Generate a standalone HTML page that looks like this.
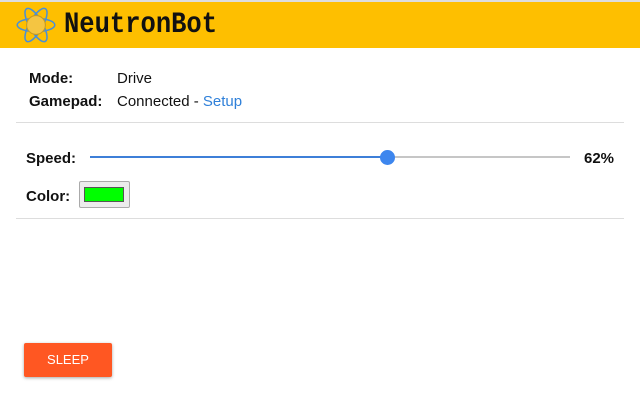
<!DOCTYPE html>
<html><head><style>
body{margin:0;width:640px;height:400px;background:#fff;font-family:"Liberation Sans",sans-serif;position:relative;overflow:hidden;font-size:15px;color:#111}
.hdr{position:absolute;top:2px;left:0;width:640px;height:46px;background:#FEBF00}
.top{position:absolute;top:0;left:0;width:640px;height:2px;background:#ddd}
.title{position:absolute;left:64px;top:8px;font-family:"Liberation Mono",monospace;font-weight:bold;font-size:25.5px;color:#111;transform:scaleY(1.15);transform-origin:left top}
.a{position:absolute}
.b{font-weight:bold}
.hr{position:absolute;left:16px;width:608px;height:1px;background:#ddd}
</style></head><body>
<div class="top"></div>
<div class="hdr"></div>
<svg class="a" style="left:15px;top:4px" width="42" height="42" viewBox="0 0 38 38">
<g fill="none" stroke="#4a8fd6" stroke-width="1.4">
<ellipse cx="19" cy="19" rx="17" ry="6"/>
<ellipse cx="19" cy="19" rx="17" ry="6" transform="rotate(60 19 19)"/>
<ellipse cx="19" cy="19" rx="17" ry="6" transform="rotate(120 19 19)"/>
</g>
<circle cx="19" cy="19" r="8.5" fill="#f4c542" stroke="#c79a20"/>
</svg>
<div class="title">NeutronBot</div>
<div class="a b" style="left:29px;top:70px">Mode:</div>
<div class="a" style="left:117px;top:70px">Drive</div>
<div class="a b" style="left:29px;top:93px">Gamepad:</div>
<div class="a" style="left:117px;top:93px">Connected - <span style="color:#2f80d9">Setup</span></div>
<div class="hr" style="top:122px"></div>
<div class="a b" style="left:26px;top:150px">Speed:</div>
<div class="a" style="left:90px;top:156px;width:298px;height:2px;background:#3d7fd8"></div>
<div class="a" style="left:388px;top:156px;width:182px;height:2px;background:#c6c6c6"></div>
<div class="a" style="left:380px;top:150px;width:15px;height:15px;border-radius:50%;background:#3d86ee"></div>
<div class="a b" style="left:584px;top:150px">62%</div>
<div class="a b" style="left:26px;top:188px">Color:</div>
<div class="a" style="left:79px;top:181px;width:51px;height:27px;border:1px solid #aaa;border-radius:2px;background:#ececec;box-sizing:border-box"></div>
<div class="a" style="left:84px;top:187px;width:40px;height:15px;background:#00ff00;border:1px solid #555;box-sizing:border-box"></div>
<div class="hr" style="top:218px"></div>
<div class="a" style="left:24px;top:343px;width:88px;height:34px;background:#FF5722;border-radius:2px;box-shadow:0 1px 3px rgba(0,0,0,.35);color:#fff;font-size:13px;text-align:center;line-height:34px">SLEEP</div>
</body></html>
